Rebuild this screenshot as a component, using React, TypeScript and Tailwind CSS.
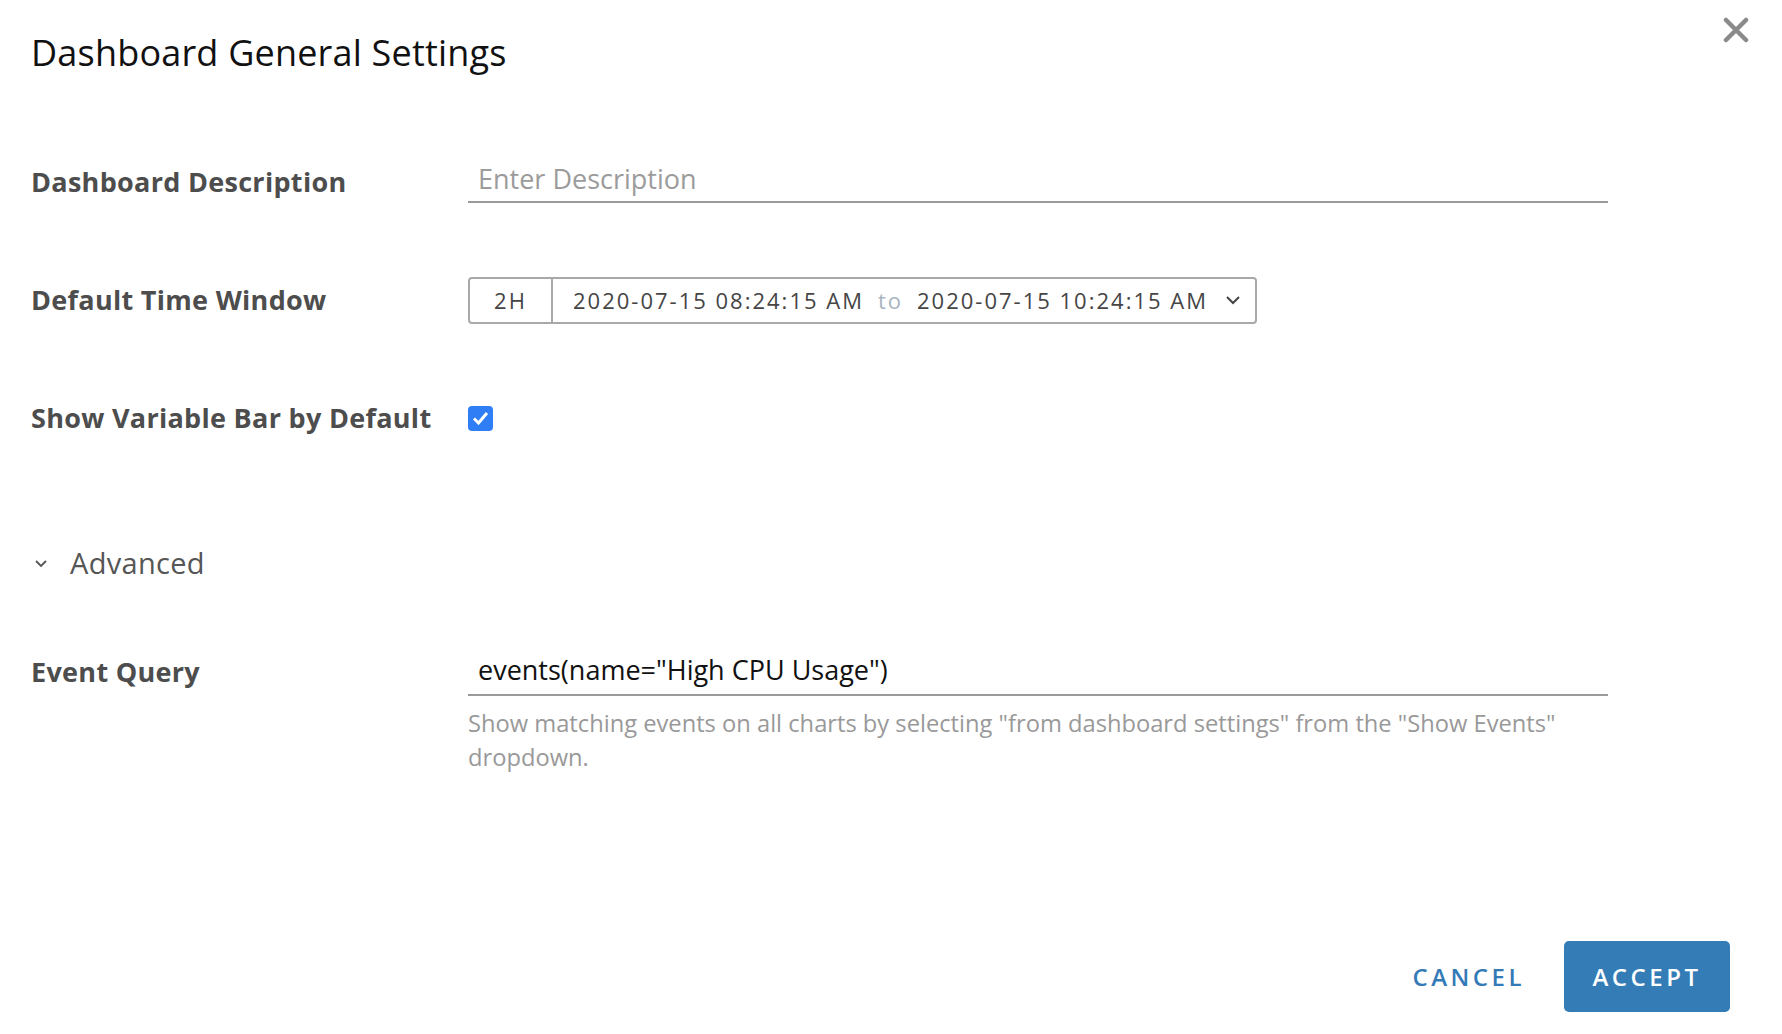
import React from 'react';

const font = { fontFamily: '"Open Sans", Lato, sans-serif' };

const Label: React.FC<{ children: React.ReactNode }> = ({ children }) => (
    <div className="w-[437px] shrink-0 text-[27px] font-bold text-[#4d4d4d] tracking-[0.3px]">{children}</div>
);

export default function App() {
    return (
        <div className="w-[1782px] h-[1034px] bg-white relative flex flex-col" style={font}>
            {/* Header */}
            <header className="h-[106px] flex items-center justify-between pl-[31px] pr-[32px]">
                <h1 className="text-[36px] font-normal text-[#111] tracking-[0.2px]">Dashboard General Settings</h1>
                <button className="self-start mt-[16px] w-[28px] h-[28px] flex items-center justify-center text-[#8a8a8a]">
                    <svg width="26" height="26" viewBox="0 0 26 26">
                        <path d="M3 3 L23 23 M23 3 L3 23" stroke="currentColor" strokeWidth="4.5" strokeLinecap="round" />
                    </svg>
                </button>
            </header>

            {/* Rows */}
            <div className="flex flex-col pl-[31px] pt-[17px]">
                <div className="h-[118px] flex items-center">
                    <Label>Dashboard Description</Label>
                    <div className="w-[1140px] h-[46px] mt-[-4px] border-b-2 border-[#9a9a9a] flex items-center pl-[10px]">
                        <span className="text-[27px] text-[#9b9b9b]">Enter Description</span>
                    </div>
                </div>

                <div className="h-[118px] flex items-center">
                    <Label>Default Time Window</Label>
                    <div className="w-[789px] h-[47px] border-2 border-[#a9a9a9] rounded-[4px] flex items-center text-[22px] text-[#454545] tracking-[2px]">
                        <div className="w-[83px] h-full border-r-2 border-[#a9a9a9] flex items-center justify-center">2H</div>
                        <div className="flex-1 flex items-center pl-[20px] pr-[14px]">
                            <span>2020-07-15 08:24:15 AM</span>
                            <span className="text-[#a8b4c0] mx-[14px]">to</span>
                            <span>2020-07-15 10:24:15 AM</span>
                            <svg className="ml-auto" width="16" height="10" viewBox="0 0 16 10">
                                <path d="M2 2 L8 8 L14 2" fill="none" stroke="#454545" strokeWidth="2" />
                            </svg>
                        </div>
                    </div>
                </div>

                <div className="h-[118px] flex items-center">
                    <Label>Show Variable Bar by Default</Label>
                    <div className="w-[25px] h-[25px] rounded-[4px] bg-[#2f7ef6] flex items-center justify-center">
                        <svg width="17" height="14" viewBox="0 0 17 14">
                            <path d="M2 7.5 L6.5 12 L15 2" fill="none" stroke="white" strokeWidth="3" />
                        </svg>
                    </div>
                </div>

                {/* Advanced toggle */}
                <div className="mt-[57px] h-[58px] flex items-center">
                    <svg className="ml-[3px]" width="14" height="9" viewBox="0 0 14 9">
                        <path d="M2 2 L7 7 L12 2" fill="none" stroke="#555" strokeWidth="1.8" />
                    </svg>
                    <span className="ml-[22px] text-[29px] text-[#565656] tracking-[0.3px]">Advanced</span>
                </div>

                <div className="mt-[58px] flex items-start">
                    <div className="pt-[2px]"><Label>Event Query</Label></div>
                    <div className="w-[1140px] flex flex-col">
                        <div className="h-[50px] border-b-2 border-[#9a9a9a] flex items-center pl-[10px] mt-[-4px]">
                            <span className="text-[27px] text-[#111]">events(name="High CPU Usage")</span>
                        </div>
                        <p className="mt-[10px] text-[23.7px] leading-[34px] text-[#999] pr-[20px]">
                            Show matching events on all charts by selecting "from dashboard settings" from the "Show Events" dropdown.
                        </p>
                    </div>
                </div>
            </div>

            {/* Footer */}
            <footer className="mt-auto mb-[22px] mr-[52px] flex items-center justify-end gap-[39px]">
                <button className="text-[24px] font-semibold text-[#337ab7] tracking-[3.5px]">CANCEL</button>
                <button className="w-[166px] h-[71px] rounded-[5px] bg-[#337cb6] text-white text-[24px] font-semibold tracking-[3.5px]">ACCEPT</button>
            </footer>
        </div>
    );
}
